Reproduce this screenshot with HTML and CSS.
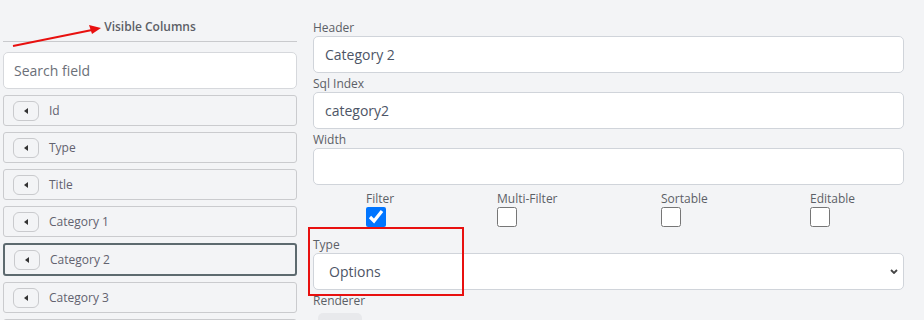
FILE: index.html
```html
<!DOCTYPE html>
<html lang="en">

<head>
    <meta charset="UTF-8">
    <meta name="viewport" content="width=device-width, initial-scale=1.0">
    <title>Column Editor</title>
    <link rel="stylesheet" href="styles.css">
</head>

<body>
    <div class="container">
        <aside class="columns">
            <h4 class="columns-title">Visible Columns</h4>
            <input class="search" type="text" placeholder="Search field">
            <div class="column-item"><button class="move"><span class="tri"></span></button>Id</div>
            <div class="column-item"><button class="move"><span class="tri"></span></button>Type</div>
            <div class="column-item"><button class="move"><span class="tri"></span></button>Title</div>
            <div class="column-item"><button class="move"><span class="tri"></span></button>Category 1</div>
            <div class="column-item active"><button class="move"><span class="tri"></span></button>Category 2</div>
            <div class="column-item"><button class="move"><span class="tri"></span></button>Category 3</div>
            <div class="column-item"></div>
        </aside>
        <main class="editor">
            <label class="field-label">Header</label>
            <input class="field" type="text" value="Category 2">
            <label class="field-label">Sql Index</label>
            <input class="field" type="text" value="category2">
            <label class="field-label">Width</label>
            <input class="field" type="text" value="">

            <div class="flags">
                <div class="flag"><span>Filter</span><input type="checkbox" checked></div>
                <div class="flag"><span>Multi-Filter</span><input type="checkbox"></div>
                <div class="flag"><span>Sortable</span><input type="checkbox"></div>
                <div class="flag"><span>Editable</span><input type="checkbox"></div>
            </div>

            <label class="field-label">Type</label>
            <select class="field select">
                <option>Options</option>
            </select>
            <label class="field-label">Renderer</label>
            <div class="renderer-btn"></div>
        </main>
    </div>

    <!-- annotation layer -->
    <svg class="note-arrow" width="110" height="60" viewBox="0 0 110 60">
        <line x1="13" y1="46" x2="92" y2="30" stroke="#e8100f" stroke-width="2"/>
        <polygon points="101,28 89,25 92,34" fill="#e8100f"/>
    </svg>
    <div class="note-box"></div>
</body>

</html>
```

FILE: styles.css
```css
* {
    box-sizing: border-box;
}

body {
    margin: 0;
    background: #f3f4f6;
    font-family: "Open Sans", "Noto Sans", Arial, sans-serif;
    color: #555;
    overflow: hidden;
}

.container {
    display: flex;
    padding-left: 3px;
    padding-right: 20px;
}

.columns {
    width: 294px;
    flex-shrink: 0;
}

.columns-title {
    margin: 0;
    height: 42px;
    padding-top: 19px;
    line-height: 16px;
    font-size: 12px;
    font-weight: 600;
    text-align: center;
    color: #5c5f66;
    border-bottom: 1px solid #c9cacd;
}

.search {
    display: block;
    width: 100%;
    height: 37px;
    margin: 10px 0 6px;
    padding: 0 10px;
    border: 1px solid #d6d8dc;
    border-radius: 5px;
    background: #fff;
    font-family: inherit;
    font-size: 14px;
}

.search::placeholder {
    color: #6b6f78;
}

.column-item {
    display: flex;
    align-items: center;
    height: 31px;
    margin-bottom: 6px;
    padding-left: 9px;
    border: 1px solid #cacbce;
    border-radius: 3px;
    font-size: 12px;
    color: #62626f;
}

.column-item.active {
    height: 33px;
    border: 2px solid #5d6a6f;
}

.move {
    display: flex;
    align-items: center;
    justify-content: center;
    width: 26px;
    height: 20px;
    margin-right: 10px;
    padding: 0;
    border: 1px solid #c9cacd;
    border-radius: 6px;
    background: transparent;
}

.tri {
    width: 0;
    height: 0;
    border-top: 3px solid transparent;
    border-bottom: 3px solid transparent;
    border-right: 4px solid #333;
}

.editor {
    flex: 1;
    margin-left: 16px;
    padding-top: 17px;
}

.field-label {
    display: block;
    padding-top: 3px;
    line-height: 16px;
    font-size: 12px;
    color: #5c5f66;
}

.field {
    display: block;
    width: 100%;
    height: 37px;
    padding: 0 11px;
    border: 1px solid #d0d4da;
    border-radius: 5px;
    background: #fff;
    font-family: inherit;
    font-size: 14px;
    color: #4d5566;
}

.select {
    appearance: none;
    padding-left: 15px;
    background: #fff url("data:image/svg+xml,%3Csvg xmlns='http://www.w3.org/2000/svg' width='8' height='5' viewBox='0 0 8 5'%3E%3Cpath d='M1 1l3 3 3-3' fill='none' stroke='%23444' stroke-width='1.8'/%3E%3C/svg%3E") no-repeat right 5px center;
}

.flags {
    display: grid;
    grid-template-columns: 131px 164px 149px 1fr;
    height: 49px;
    padding: 6px 0 0 53px;
}

.flag {
    display: flex;
    flex-direction: column;
    align-items: flex-start;
    font-size: 12px;
    line-height: 16px;
    color: #5c5f66;
}

.flag input {
    width: 20px;
    height: 20px;
    margin: 0;
}

.renderer-btn {
    width: 44px;
    height: 20px;
    margin: 4px 0 0 5px;
    border-radius: 5px;
    background: #e8e9ec;
}

.note-arrow {
    position: absolute;
    left: 0;
    top: 0;
}

.note-box {
    position: absolute;
    left: 308px;
    top: 227px;
    width: 156px;
    height: 69px;
    border: 2px solid #e8100f;
}
```
